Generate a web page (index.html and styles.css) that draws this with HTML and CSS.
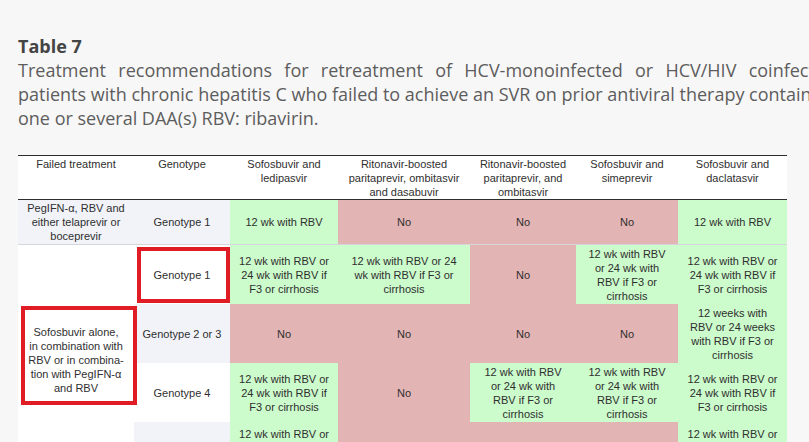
FILE: index.html
```html
<!DOCTYPE html>
<html>
<head>
<meta charset="utf-8">
<link rel="stylesheet" href="styles.css">
</head>
<body>
<div class="page">
  <div class="title">Table 7</div>
  <p class="caption"><span class="cap-line cap-justify">Treatment recommendations for retreatment of HCV-monoinfected or HCV/HIV coinfected</span><span class="cap-line cap-nowrap">patients with chronic hepatitis C who failed to achieve an SVR on prior antiviral therapy containing</span><span class="cap-line">one or several DAA(s) RBV: ribavirin.</span></p>
  <div class="table-wrap">
    <table class="tbl">
      <colgroup>
        <col class="c1"><col class="c2"><col class="c3"><col class="c4"><col class="c5"><col class="c6"><col class="c7">
      </colgroup>
      <thead>
        <tr class="hrow">
          <th>Failed treatment</th>
          <th>Genotype</th>
          <th>Sofosbuvir and<br>ledipasvir</th>
          <th>Ritonavir-boosted<br>paritaprevir, ombitasvir<br>and dasabuvir</th>
          <th>Ritonavir-boosted<br>paritaprevir, and<br>ombitasvir</th>
          <th>Sofosbuvir and<br>simeprevir</th>
          <th>Sofosbuvir and<br>daclatasvir</th>
        </tr>
      </thead>
      <tbody>
        <tr class="r1">
          <td class="grey">PegIFN-α, RBV and<br>either telaprevir or<br>boceprevir</td>
          <td class="grey">Genotype 1</td>
          <td class="yes">12 wk with RBV</td>
          <td class="no">No</td>
          <td class="no">No</td>
          <td class="no">No</td>
          <td class="yes">12 wk with RBV</td>
        </tr>
        <tr class="r2">
          <td class="merged" rowspan="4"><span class="merged-text">Sofosbuvir alone,<br>in combination with<br>RBV or in combina-<br>tion with PegIFN-α<br>and RBV</span></td>
          <td class="white">Genotype 1</td>
          <td class="yes">12 wk with RBV or<br>24 wk with RBV if<br>F3 or cirrhosis</td>
          <td class="yes">12 wk with RBV or 24<br>wk with RBV if F3 or<br>cirrhosis</td>
          <td class="no">No</td>
          <td class="yes">12 wk with RBV<br>or 24 wk with<br>RBV if F3 or<br>cirrhosis</td>
          <td class="yes">12 wk with RBV or<br>24 wk with RBV if<br>F3 or cirrhosis</td>
        </tr>
        <tr class="r3">
          <td class="grey">Genotype 2 or 3</td>
          <td class="no">No</td>
          <td class="no">No</td>
          <td class="no">No</td>
          <td class="no">No</td>
          <td class="yes">12 weeks with<br>RBV or 24 weeks<br>with RBV if F3 or<br>cirrhosis</td>
        </tr>
        <tr class="r4">
          <td class="white">Genotype 4</td>
          <td class="yes">12 wk with RBV or<br>24 wk with RBV if<br>F3 or cirrhosis</td>
          <td class="no">No</td>
          <td class="yes">12 wk with RBV<br>or 24 wk with<br>RBV if F3 or<br>cirrhosis</td>
          <td class="yes">12 wk with RBV<br>or 24 wk with<br>RBV if F3 or<br>cirrhosis</td>
          <td class="yes">12 wk with RBV or<br>24 wk with RBV if<br>F3 or cirrhosis</td>
        </tr>
        <tr class="r5">
          <td class="grey">Genotype 5 or 6</td>
          <td class="yes top">12 wk with RBV or<br>24 wk with RBV if<br>F3 or cirrhosis</td>
          <td class="no">No</td>
          <td class="no">No</td>
          <td class="no">No</td>
          <td class="yes top">12 wk with RBV or<br>24 wk with RBV if<br>F3 or cirrhosis</td>
        </tr>
      </tbody>
    </table>
    <div class="mark mark-genotype"></div>
    <div class="mark mark-failed"></div>
  </div>
</div>
</body>
</html>
```

FILE: styles.css
```css
html, body {
  margin: 0;
  padding: 0;
  background: #f7f7f7;
  overflow: hidden;
}

.page {
  padding: 34px 0 0 18px;
  width: 818px;
}

.title {
  font-family: "Open Sans", sans-serif;
  font-weight: 700;
  font-size: 18px;
  line-height: 24px;
  color: #444444;
}

.caption {
  margin: 0;
  font-family: "Open Sans", sans-serif;
  font-size: 18px;
  line-height: 24px;
  color: #5d5d5d;
}

.cap-line {
  display: block;
  text-align: left;
}

.cap-justify {
  text-align: justify;
  text-align-last: justify;
}

.cap-nowrap {
  white-space: nowrap;
}

.table-wrap {
  position: relative;
  margin-top: 25px;
  width: 769px;
}

.tbl {
  border-collapse: collapse;
  table-layout: fixed;
  width: 769px;
  background: #ffffff;
  font-family: "Liberation Sans", Arial, sans-serif;
  font-size: 11px;
  line-height: 14px;
  color: #2f2f2f;
}

.c1 { width: 116px; }
.c2 { width: 96px; }
.c3 { width: 108px; }
.c4 { width: 132px; }
.c5 { width: 106px; }
.c6 { width: 102px; }
.c7 { width: 109px; }

.tbl th,
.tbl td {
  padding: 0 2px;
  text-align: center;
  white-space: nowrap;
}

.tbl th {
  font-weight: 400;
  vertical-align: top;
  padding-top: 1px;
  height: 43px;
  box-sizing: border-box;
  border-top: 1px solid #2e2e2e;
  border-bottom: 1px solid #2e2e2e;
  background: #ffffff;
}

.tbl td {
  vertical-align: middle;
}

.r1 td {
  height: 44px;
  border-bottom: 1px solid #d4d6dc;
}

.r2 td { height: 59px; }
.r3 td { height: 59px; }
.r4 td { height: 59px; }
.r5 td { height: 56px; }

.tbl td.top {
  vertical-align: top;
  padding-top: 5px;
}

.grey { background: #f1f3f9; }
.white { background: #ffffff; }
.yes { background: #ccfbcc; }
.no { background: #e3b4b4; }
.merged {
  background: #ffffff;
}

.merged-text {
  display: block;
  position: relative;
  top: -4px;
}

.mark {
  position: absolute;
  box-sizing: border-box;
  border: 4px solid #e01d25;
}

.mark-genotype {
  left: 119px;
  top: 92px;
  width: 93px;
  height: 56px;
}

.mark-failed {
  left: 3px;
  top: 151px;
  width: 116px;
  height: 99px;
}
```
